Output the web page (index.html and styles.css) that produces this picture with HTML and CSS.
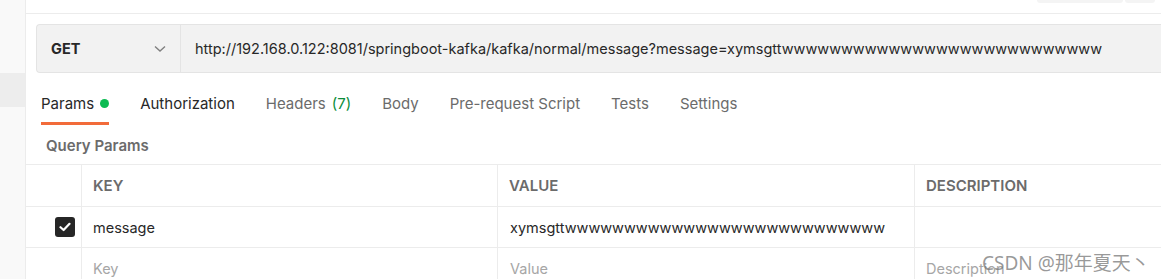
FILE: index.html
```html
<!DOCTYPE html>
<html lang="en">
  <head>
    <meta charset="UTF-8" />
    <title>Request</title>
    <link rel="stylesheet" href="styles.css">
  </head>
  <body>
    <div class="sidebar">
      <div class="sidebar-item"></div>
    </div>

    <div class="main">
      <div class="topbar">
        <span class="top-pill wide"></span>
        <span class="top-pill"></span>
      </div>

      <div class="url-bar">
        <div class="method">
          <span>GET</span>
          <svg class="chevron" width="12" height="8" viewBox="0 0 12 8">
            <path d="M1 1.5 L6 6 L11 1.5" fill="none" stroke="#808080" stroke-width="1.4" />
          </svg>
        </div>
        <div class="url">http://192.168.0.122:8081/springboot-kafka/kafka/normal/message?message=xymsgttwwwwwwwwwwwwwwwwwwwwwwwwwww</div>
      </div>

      <div class="tabs">
        <div class="tab active">Params <span class="dot"></span></div>
        <div class="tab dark">Authorization</div>
        <div class="tab">Headers <span class="count">(7)</span></div>
        <div class="tab">Body</div>
        <div class="tab">Pre-request Script</div>
        <div class="tab">Tests</div>
        <div class="tab">Settings</div>
      </div>

      <div class="section-title">Query Params</div>

      <div class="params">
        <div class="cell check-cell head"></div>
        <div class="cell head">KEY</div>
        <div class="cell head">VALUE</div>
        <div class="cell head">DESCRIPTION</div>

        <div class="cell check-cell">
          <span class="checkbox">
            <svg width="12" height="10" viewBox="0 0 12 10">
              <path d="M1.5 5.2 L4.6 8 L10.5 1.8" fill="none" stroke="#fff" stroke-width="2.2" stroke-linecap="round" stroke-linejoin="round" />
            </svg>
          </span>
        </div>
        <div class="cell">message</div>
        <div class="cell value">xymsgttwwwwwwwwwwwwwwwwwwwwwwwwwww</div>
        <div class="cell"></div>

        <div class="cell check-cell"></div>
        <div class="cell placeholder">Key</div>
        <div class="cell placeholder value">Value</div>
        <div class="cell placeholder">Description</div>
      </div>
    </div>

    <div class="watermark">CSDN @那年夏天丶</div>
  </body>
</html>
```

FILE: styles.css
```css
* {
  box-sizing: border-box;
}

body {
  margin: 0;
  font-family: "Inter", "Noto Sans", sans-serif;
  font-size: 14.5px;
  color: #282828;
  background-color: #ffffff;
  display: flex;
  height: 279px;
  overflow: hidden;
}

.sidebar {
  width: 26px;
  flex-shrink: 0;
  background-color: #f9f9f9;
  border-right: 1px solid #ececec;
  padding-top: 73px;
}

.sidebar-item {
  height: 34px;
  background-color: #ededed;
}

.main {
  flex: 1;
  min-width: 0;
}

.topbar {
  height: 14px;
  border-bottom: 1px solid #ececec;
  display: flex;
  justify-content: flex-end;
  gap: 2px;
  padding-right: 6px;
}

.top-pill {
  width: 30px;
  height: 3px;
  background-color: #f4f4f4;
  border-radius: 0 0 5px 5px;
}

.top-pill.wide {
  width: 86px;
}

.url-bar {
  display: flex;
  height: 49px;
  margin: 10px 0 0 10px;
  background-color: #f2f2f2;
  border: 1px solid #e4e4e4;
  border-right: none;
  border-radius: 4px 0 0 4px;
}

.method {
  width: 144px;
  padding: 0 14px;
  display: flex;
  align-items: center;
  justify-content: space-between;
  border-right: 1px solid #e4e4e4;
  font-weight: 700;
  flex-shrink: 0;
}

.url {
  display: flex;
  align-items: center;
  padding-left: 14px;
  white-space: nowrap;
  overflow: hidden;
}

.tabs {
  display: flex;
  gap: 31px;
  padding-left: 15px;
  margin-top: 15px;
  font-size: 15px;
}

.tab {
  color: #6b6b6b;
  padding: 6px 0 9px;
  border-bottom: 3px solid transparent;
  display: flex;
  align-items: center;
  gap: 6px;
}

.tab.active {
  color: #282828;
  border-bottom-color: #f26b3a;
}

.tab.dark {
  color: #282828;
}

.dot {
  width: 9px;
  height: 9px;
  border-radius: 50%;
  background-color: #0cbb52;
}

.count {
  color: #0a8c3a;
}

.section-title {
  padding: 11px 0 9px 20px;
  color: #6b6b6b;
  font-weight: 600;
  font-size: 15px;
}

.params {
  display: grid;
  grid-template-columns: 55px 416px 417px 1fr;
  grid-template-rows: 42px;
  grid-auto-rows: 41px;
  border-top: 1px solid #ececec;
}

.cell {
  display: flex;
  align-items: center;
  padding-left: 11px;
  border-bottom: 1px solid #ececec;
  border-left: 1px solid #ececec;
  white-space: nowrap;
  overflow: hidden;
}

.cell.head {
  color: #6b6b6b;
  font-weight: 600;
  font-size: 15px;
}

.cell.value {
  padding-left: 12px;
}

.check-cell {
  border-left: none;
  padding-left: 0;
  justify-content: flex-end;
  padding-right: 6px;
}

.checkbox {
  width: 20px;
  height: 20px;
  border-radius: 3px;
  background-color: #262626;
  display: flex;
  align-items: center;
  justify-content: center;
}

.placeholder {
  color: #a6a6a6;
}

.watermark {
  position: absolute;
  left: 982px;
  top: 248px;
  font-family: "Noto Sans", "Noto Sans CJK SC", sans-serif;
  font-size: 19px;
  color: rgba(120, 120, 120, 0.75);
}
```
